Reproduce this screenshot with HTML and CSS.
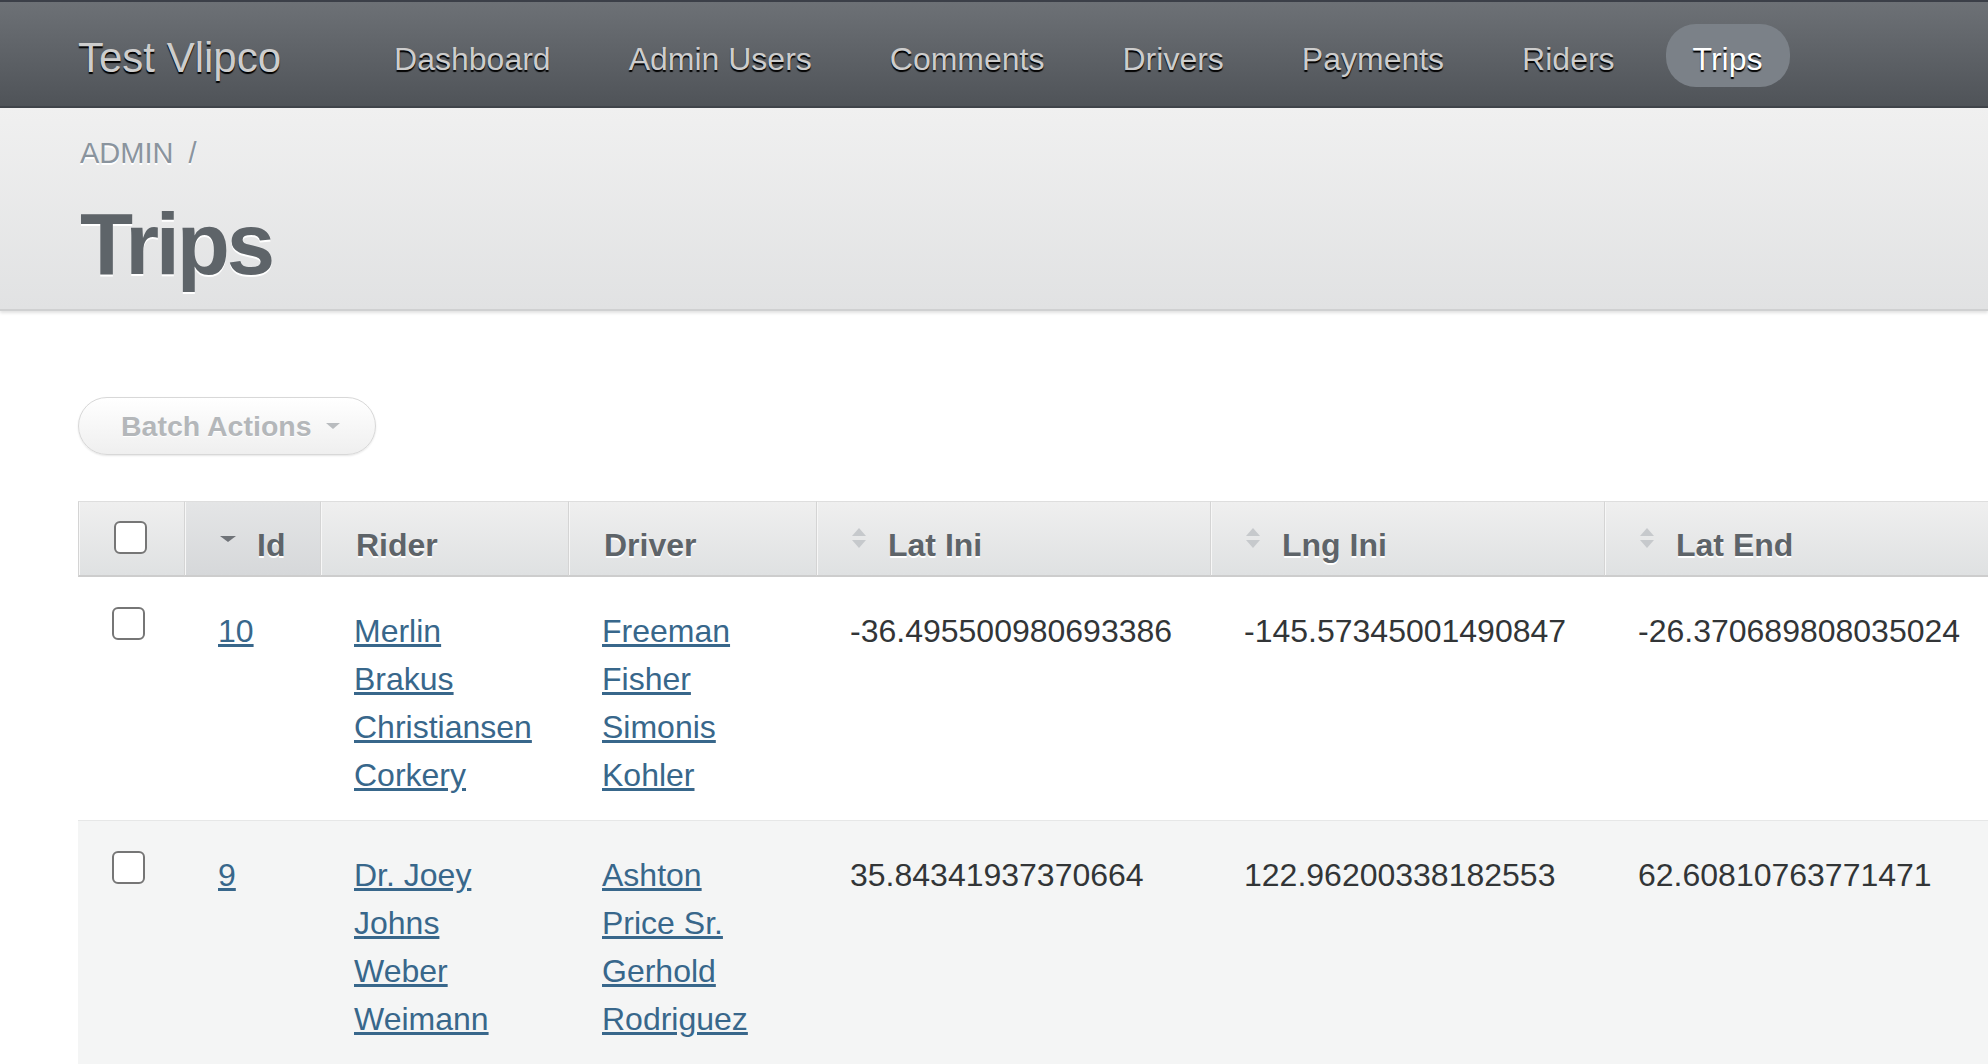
FILE: index.html
```html
<!DOCTYPE html>
<html lang="en">
<head>
<meta charset="utf-8">
<title>Trips | Test Vlipco</title>
<link rel="stylesheet" href="styles.css">
</head>
<body>
<div class="header">
  <h1 class="site-title">Test Vlipco</h1>
  <ul class="tabs">
    <li><a href="#">Dashboard</a></li>
    <li><a href="#">Admin Users</a></li>
    <li><a href="#">Comments</a></li>
    <li><a href="#">Drivers</a></li>
    <li><a href="#">Payments</a></li>
    <li><a href="#">Riders</a></li>
    <li class="current"><a href="#">Trips</a></li>
  </ul>
</div>

<div class="title-bar">
  <div class="breadcrumb"><a href="#">Admin</a><span class="sep">/</span></div>
  <h2 class="page-title">Trips</h2>
</div>

<div class="main">
  <div class="table-tools">
    <button class="batch-btn" type="button">Batch Actions<span class="caret"></span></button>
  </div>

  <table class="index-table">
    <colgroup>
      <col class="c-sel"><col class="c-id"><col class="c-name"><col class="c-name"><col class="c-num"><col class="c-num"><col class="c-num">
    </colgroup>
    <thead>
      <tr>
        <th class="col-sel"><input type="checkbox" class="cb"></th>
        <th class="sorted"><span class="arrow-down"></span>Id</th>
        <th>Rider</th>
        <th>Driver</th>
        <th><svg class="sort-icon" width="14" height="21" viewBox="0 0 14 21"><polygon points="0,8 7,0 14,8" /><polygon points="0,12 14,12 7,20" /></svg>Lat Ini</th>
        <th><svg class="sort-icon" width="14" height="21" viewBox="0 0 14 21"><polygon points="0,8 7,0 14,8" /><polygon points="0,12 14,12 7,20" /></svg>Lng Ini</th>
        <th><svg class="sort-icon" width="14" height="21" viewBox="0 0 14 21"><polygon points="0,8 7,0 14,8" /><polygon points="0,12 14,12 7,20" /></svg>Lat End</th>
      </tr>
    </thead>
    <tbody>
      <tr class="odd">
        <td><input type="checkbox" class="cb"></td>
        <td><a href="#">10</a></td>
        <td><a href="#">Merlin<br>Brakus<br>Christiansen<br>Corkery</a></td>
        <td><a href="#">Freeman<br>Fisher<br>Simonis<br>Kohler</a></td>
        <td>-36.495500980693386</td>
        <td>-145.57345001490847</td>
        <td>-26.370689808035024</td>
      </tr>
      <tr class="even">
        <td><input type="checkbox" class="cb"></td>
        <td><a href="#">9</a></td>
        <td><a href="#">Dr. Joey<br>Johns<br>Weber<br>Weimann</a></td>
        <td><a href="#">Ashton<br>Price Sr.<br>Gerhold<br>Rodriguez</a></td>
        <td>35.84341937370664</td>
        <td>122.96200338182553</td>
        <td>62.60810763771471</td>
      </tr>
    </tbody>
  </table>
</div>
</body>
</html>
```

FILE: styles.css
```css
* {
  box-sizing: border-box;
}

html,
body {
  margin: 0;
  padding: 0;
}

body {
  font-family: "Liberation Sans", Arial, Helvetica, sans-serif;
  background: #ffffff;
  color: #323537;
  overflow-x: hidden;
}

/* ---------- Header ---------- */
.header {
  display: flex;
  align-items: center;
  height: 108px;
  padding-left: 78px;
  border-top: 2px solid #3b3f48;
  border-bottom: 2px solid #40444a;
  background: linear-gradient(#6d7176, #4f5358);
}

.site-title {
  margin: 8px 0 0;
  font-size: 42px;
  font-weight: normal;
  line-height: 1;
  color: #cdcdcd;
  text-shadow: 0 2px 1px #000;
  white-space: nowrap;
}

.tabs {
  display: flex;
  gap: 24px;
  list-style: none;
  margin: 3px 0 0 86px;
  padding: 0;
}

.tabs a {
  display: block;
  height: 63px;
  padding: 7px 27px 0;
  line-height: 56px;
  border-radius: 30px;
  font-size: 32px;
  color: #cdcdcd;
  text-decoration: none;
  text-shadow: 0 2px 1px #000;
  white-space: nowrap;
}

.tabs .current a {
  background: #7b8188;
  color: #ffffff;
}

/* ---------- Title bar ---------- */
.title-bar {
  padding: 27px 0 22px 80px;
  background: linear-gradient(#f0f0f0, #e1e2e3);
  border-bottom: 2px solid #cfd0d1;
  box-shadow: 0 2px 3px rgba(0, 0, 0, 0.12);
}

.breadcrumb {
  font-size: 29px;
  line-height: 36px;
  color: #8a949e;
  text-transform: uppercase;
  text-shadow: 0 2px 0 #fff;
}

.breadcrumb a {
  color: #8a949e;
  text-decoration: none;
}

.breadcrumb .sep {
  margin-left: 15px;
}

.page-title {
  margin: 29px 0 0;
  font-size: 87px;
  line-height: 87px;
  font-weight: bold;
  letter-spacing: -3.2px;
  color: #5e6469;
  text-shadow: 0 2px 0 #fff;
}

/* ---------- Main ---------- */
.main {
  padding: 86px 0 0 78px;
}

.table-tools {
  display: flex;
}

.batch-btn {
  display: inline-flex;
  align-items: center;
  height: 58px;
  padding: 0 35px 0 42px;
  border: 1px solid #d8d8d8;
  border-radius: 29px;
  background: linear-gradient(#ffffff, #efefef);
  box-shadow: 0 1px 2px rgba(0, 0, 0, 0.1);
  font-family: "Liberation Sans", Arial, Helvetica, sans-serif;
  font-size: 28.5px;
  font-weight: bold;
  color: #b4b7ba;
  text-shadow: 0 1px 0 #fff;
  cursor: default;
}

.batch-btn .caret {
  display: inline-block;
  width: 0;
  height: 0;
  margin-left: 14px;
  border-left: 7px solid transparent;
  border-right: 7px solid transparent;
  border-top: 6px solid #b9bcbf;
}

/* ---------- Table ---------- */
.index-table {
  width: 1920px;
  margin-top: 46px;
  border-collapse: separate;
  border-spacing: 0;
  table-layout: fixed;
  font-size: 32px;
  line-height: 48px;
}

.c-sel { width: 106px; }
.c-id { width: 136px; }
.c-name { width: 248px; }
.c-num { width: 394px; }

.index-table th {
  padding: 19px 0 6px 35px;
  vertical-align: top;
  text-align: left;
  font-weight: bold;
  color: #5e6469;
  text-shadow: 0 2px 0 #fff;
  white-space: nowrap;
  overflow: hidden;
  background: linear-gradient(#efefef, #dfe1e2);
  border-top: 1px solid #dedede;
  border-bottom: 2px solid #cdcdcd;
  border-left: 1px solid #d4d4d4;
  box-shadow: inset 1px 0 0 #f7f7f7;
}

.index-table th.sorted {
  background: linear-gradient(#e4e5e6, #d6d8da);
}

.arrow-down {
  display: inline-block;
  width: 0;
  height: 0;
  margin-right: 21px;
  border-left: 8px solid transparent;
  border-right: 8px solid transparent;
  border-top: 6px solid #6f7378;
  vertical-align: 14px;
}

.sort-icon {
  margin-right: 22px;
  vertical-align: 7px;
  fill: #c6c9cc;
}

.index-table td {
  padding: 30px 24px 21px 34px;
  vertical-align: top;
  color: #323537;
  white-space: nowrap;
}

.index-table tr.even td {
  background: #f4f5f5;
  border-top: 1px solid #e6e7e7;
}

.index-table td a {
  color: #38678b;
  text-decoration: underline;
}

.cb {
  appearance: none;
  -webkit-appearance: none;
  display: block;
  width: 33px;
  height: 33px;
  margin: 0;
  border: 2px solid #767676;
  border-radius: 6px;
  background: #ffffff;
}
```
